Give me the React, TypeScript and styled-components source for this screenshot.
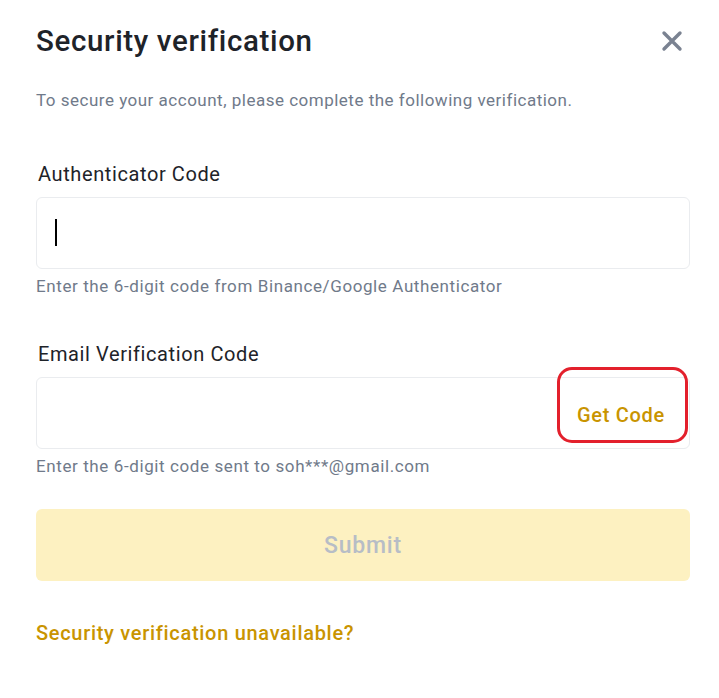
import React from "react";
import styled, { createGlobalStyle } from "styled-components";

const Global = createGlobalStyle`
  html, body { margin: 0; padding: 0; background: #ffffff; }
  body { font-family: Roboto, "Noto Sans", "Liberation Sans", sans-serif; -webkit-font-smoothing: antialiased; }
  * { box-sizing: border-box; }
`;

const Modal = styled.div`
  width: 719px;
  height: 698px;
  background: #ffffff;
  padding: 21px 29px 0 36px;
  display: flex;
  flex-direction: column;
`;

const Header = styled.div`
  display: flex;
  align-items: center;
  justify-content: space-between;
  height: 40px;
`;

const Title = styled.h1`
  margin: 0;
  font-size: 29.5px;
  font-weight: 500;
  color: #1e2329;
  letter-spacing: 0.65px;
`;

const CloseButton = styled.button`
  border: none;
  background: transparent;
  padding: 0;
  width: 26px;
  height: 26px;
  margin-right: 5px;
  display: flex;
  align-items: center;
  justify-content: center;
  cursor: pointer;
`;

const Subtitle = styled.p`
  margin: 28px 0 0;
  font-size: 17px;
  line-height: 22px;
  letter-spacing: 0.5px;
  color: #707a8a;
`;

const Field = styled.div<{ $gap: number }>`
  margin-top: ${(p) => p.$gap}px;
  display: flex;
  flex-direction: column;
`;

const Label = styled.label`
  font-size: 20px;
  line-height: 24px;
  letter-spacing: 0.6px;
  color: #1e2329;
  padding-left: 2px;
  margin-bottom: 11px;
`;

const InputBox = styled.div`
  position: relative;
  height: 72px;
  border: 1px solid #eaecef;
  border-radius: 6px;
  display: flex;
  align-items: center;
  padding: 0 24px 0 18px;
`;

const Caret = styled.span`
  width: 1.5px;
  height: 27px;
  margin-top: -2px;
  background: #000000;
`;

const Spacer = styled.div`
  flex: 1;
`;

const GetCode = styled.button`
  border: none;
  background: transparent;
  padding: 0;
  margin-top: 4px;
  font-family: inherit;
  font-size: 20px;
  font-weight: 500;
  letter-spacing: 0.7px;
  color: #c99400;
  cursor: pointer;
`;

const Annotation = styled.div`
  position: absolute;
  left: 520px;
  top: -11px;
  width: 131px;
  height: 76px;
  border: 3px solid #e3202c;
  border-radius: 15px;
  pointer-events: none;
`;

const Help = styled.div`
  margin-top: 7px;
  font-size: 17px;
  line-height: 20px;
  letter-spacing: 0.6px;
  color: #707a8a;
`;

const Submit = styled.button`
  margin-top: 33px;
  height: 72px;
  width: 100%;
  border: none;
  border-radius: 6px;
  background: #fdf1c1;
  color: #b7bdc6;
  font-family: inherit;
  font-size: 23px;
  font-weight: 500;
  letter-spacing: 0.8px;
  cursor: not-allowed;
`;

const HelpLink = styled.a`
  margin-top: 40px;
  font-size: 20px;
  font-weight: 500;
  letter-spacing: 0.7px;
  color: #c99400;
  text-decoration: none;
  cursor: pointer;
`;

export default function App() {
  return (
    <>
      <Global />
      <Modal>
        <Header>
          <Title>Security verification</Title>
          <CloseButton aria-label="Close">
            <svg width="22" height="22" viewBox="0 0 22 22">
              <path d="M3 3 L19 19 M19 3 L3 19" stroke="#7a8291" strokeWidth="3.4" strokeLinecap="round" />
            </svg>
          </CloseButton>
        </Header>
        <Subtitle>To secure your account, please complete the following verification.</Subtitle>

        <Field $gap={51}>
          <Label>Authenticator Code</Label>
          <InputBox>
            <Caret />
          </InputBox>
          <Help>Enter the 6-digit code from Binance/Google Authenticator</Help>
        </Field>

        <Field $gap={46}>
          <Label>Email Verification Code</Label>
          <InputBox>
            <Spacer />
            <GetCode>Get Code</GetCode>
            <Annotation />
          </InputBox>
          <Help>Enter the 6-digit code sent to soh***@gmail.com</Help>
        </Field>

        <Submit disabled>Submit</Submit>
        <HelpLink>Security verification unavailable?</HelpLink>
      </Modal>
    </>
  );
}
